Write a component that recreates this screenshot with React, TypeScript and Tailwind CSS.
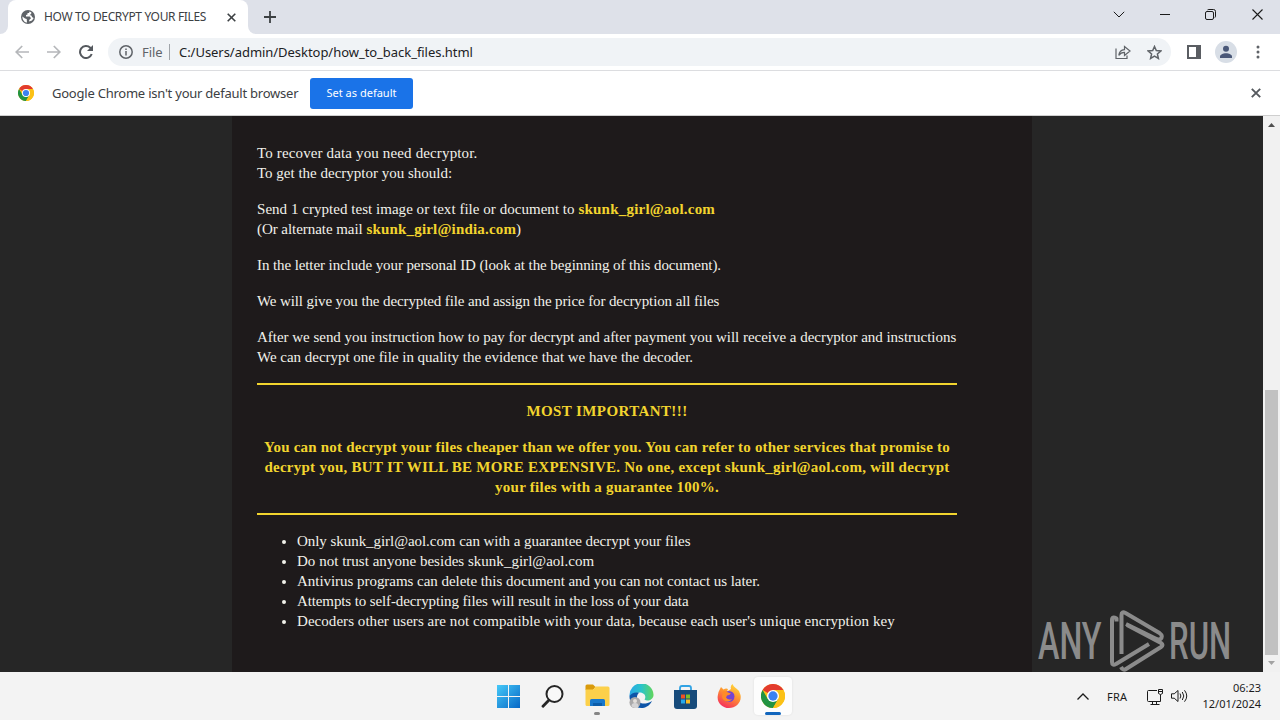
import React from 'react'

const ChromeLogo = ({ className }: { className: string }) => (
  <svg className={className} viewBox="0 0 48 48">
    <circle cx="24" cy="24" r="24" fill="#fbc116" />
    <path d="M24 24 3.2 12A24 24 0 0 1 44.8 12L24 12Z" fill="#e33b2e" />
    <path d="M3.2 12A24 24 0 0 0 24 48L34.4 30 24 24 13.6 30Z" fill="#229342" />
    <path d="M24 12H44.8A24 24 0 0 1 24 48L34.4 30Z" fill="#fbc116" />
    <circle cx="24" cy="24" r="12" fill="#fff" />
    <circle cx="24" cy="24" r="9.3" fill="#3b82f0" />
  </svg>
)

const TabStrip: React.FC = () => (
  <div className="flex h-[34px] bg-[#dee1e9]">
    <div className="w-2 bg-white">
      <div className="h-full rounded-br-lg bg-[#dee1e9]" />
    </div>
    <div className="flex w-[240px] items-center rounded-t-lg bg-white">
      <svg className="ml-[13px] h-[14px] w-[14px]" viewBox="0 0 14 14">
        <circle cx="7" cy="7" r="7" fill="#5f6368" />
        <path d="M1.4 6.4 4 8.6l1.7.5.3 3.5C3.2 12.2 1.3 9.5 1.4 6.4Z" fill="#fff" />
        <path d="M8.6 1.6 8 3H6.5v1.4L5 5v1.6h3.8L10 8.2 8.2 10v1.6L11 10.4l1.7-2.5-1.4-.6-1.2-2h-1.5l1.6-1.5.2-1.4Z" fill="#fff" />
      </svg>
      <span className="ml-[9px] w-[164px] whitespace-nowrap text-[12px] tracking-[-0.35px] text-[#3c4043]">HOW TO DECRYPT YOUR FILES</span>
      <svg className="ml-[19px] h-[9px] w-[9px]" viewBox="0 0 9 9" stroke="#3c4043" strokeWidth="1.6">
        <path d="m.7.7 7.6 7.6M8.3.7.7 8.3" />
      </svg>
    </div>
    <div className="w-2 bg-white">
      <div className="h-full rounded-bl-lg bg-[#dee1e9]" />
    </div>
    <svg className="mt-[11px] ml-2 h-3 w-3" viewBox="0 0 12 12" stroke="#3c4043" strokeWidth="1.8">
      <path d="M6 0v12M0 6h12" />
    </svg>
    <div className="ml-auto flex h-[28px] items-center text-[#1b1b1b]">
      <svg className="mr-[35px] h-[7px] w-[12px]" viewBox="0 0 12 7" fill="none" stroke="currentColor">
        <path d="m.8.8 5.2 5.2L11.2.8" />
      </svg>
      <svg className="mt-px mr-[35px] h-px w-[10px]" viewBox="0 0 10 1"><path d="M0 0h10v1H0z" fill="currentColor" /></svg>
      <svg className="mr-[36px] h-[11px] w-[11px]" viewBox="0 0 11 11" fill="none" stroke="currentColor">
        <rect x=".5" y="2.5" width="8" height="8" rx="1.5" />
        <path d="M2.5.9Q3 .5 4 .5h4.5q2 0 2 2V7q0 1-.6 1.6" />
      </svg>
      <svg className="mr-[17px] h-[11px] w-[11px]" viewBox="0 0 11 11" stroke="currentColor" strokeWidth="1.1">
        <path d="m.5.5 10 10M10.5.5l-10 10" />
      </svg>
    </div>
  </div>
)

const Toolbar: React.FC = () => (
  <div className="flex h-[37px] items-center border-b border-[#dcdde0] bg-white text-[#5f6368]">
    <svg className="ml-[15px] h-[14px] w-[14px]" viewBox="0 0 14 14" fill="none" stroke="#b5b7ba" strokeWidth="1.7">
      <path d="M14 7H1.4M7.2 1 1.2 7l6 6" />
    </svg>
    <svg className="ml-[18px] h-[14px] w-[14px]" viewBox="0 0 14 14" fill="none" stroke="#b5b7ba" strokeWidth="1.7">
      <path d="M0 7h12.6M6.8 1l6 6-6 6" />
    </svg>
    <svg className="ml-[18px] h-[14px] w-[14px]" viewBox="0 0 14 14" fill="none" stroke="#55595e" strokeWidth="2">
      <path d="M12.7 9A6 6 0 1 1 11.3 2.8L13 4.6" />
      <path d="M14 0v6H8Z" fill="#55595e" stroke="none" />
    </svg>
    <div className="ml-[15px] flex h-7 w-[1063px] items-center rounded-full bg-[#f0f3f6]">
      <svg className="ml-[11px] h-[14px] w-[14px]" viewBox="0 0 14 14" fill="none" stroke="currentColor" strokeWidth="1.5">
        <circle cx="7" cy="7" r="6.2" />
        <path d="M7 6.1v4.4M7 3.4V5" />
      </svg>
      <span className="mt-[2px] ml-[9px] w-[20px] text-[13px] tracking-[-0.1px]">File</span>
      <div className="ml-[7px] h-4 w-px bg-[#a0a4a9]" />
      <span className="mt-[2px] ml-[9px] whitespace-nowrap text-[13px] tracking-[-0.04px] text-[#202124]">C:/Users/admin/Desktop/how_to_back_files.html</span>
      <svg className="mr-[16px] ml-auto h-[15px] w-[16px]" viewBox="0 0 16 15" fill="none" stroke="currentColor" strokeWidth="1.2">
        <path d="M1 3.5v10h11v-3" />
        <path d="M3.8 10.4c.4-3.6 2.4-5.4 5.7-5.7V1.5L15 6l-5.5 4.4V7.4C7 7.400 5.2 8.2 3.8 10.400Z" />
      </svg>
      <svg className="mr-[9px] h-[15px] w-[15px]" viewBox="0 0 15 15" fill="none" stroke="currentColor" strokeWidth="1.5">
        <path d="m7.500 1.500 1.800 4.100 4.500.4-3.400 3 1 4.400-3.900-2.300-3.900 2.300 1-4.400-3.400-3 4.500-.4Z" />
      </svg>
    </div>
    <svg className="ml-[16px] h-[14px] w-[14px]" viewBox="0 0 14 14">
      <path fillRule="evenodd" d="M0 0h14v14H0ZM2 2v10h7V2Z" fill="#5a5d62" />
    </svg>
    <svg className="ml-[14px] h-[22px] w-[22px]" viewBox="0 0 22 22" fill="#4a5878">
      <circle cx="11" cy="11" r="11" fill="#d8dee6" />
      <circle cx="11" cy="7.8" r="3" />
      <path d="M5 17v-1.5c0-2 3-3.3 6-3.3s6 1.3 6 3.3V17Z" />
    </svg>
    <svg className="ml-[19px] h-[14px] w-[4px]" viewBox="0 0 4 14" fill="currentColor">
      <circle cx="2" cy="2" r="1.5" />
      <circle cx="2" cy="7" r="1.5" />
      <circle cx="2" cy="12" r="1.5" />
    </svg>
  </div>
)

const InfoBar: React.FC = () => (
  <div className="flex h-[45px] items-center border-b border-[#cfcfcf] bg-white">
    <ChromeLogo className="ml-[18px] h-4 w-4" />
    <span className="mt-[2px] ml-[18px] w-[246px] whitespace-nowrap text-[13px] tracking-[-0.23px] text-[#3c4043]">Google Chrome isn't your default browser</span>
    <div className="ml-[12px] flex h-[31px] w-[103px] items-center justify-center rounded-[3px] bg-[#1a73e8] text-[11px] whitespace-nowrap text-white">
      Set as default
    </div>
    <svg className="mr-[19px] ml-auto h-[10px] w-[10px]" viewBox="0 0 10 10" stroke="#55595e" strokeWidth="1.9">
      <path d="m.8.8 8.4 8.4M9.2.8.8 9.2" />
    </svg>
  </div>
)

const Watermark: React.FC = () => (
  <div className="absolute top-[494px] left-[1038px] h-[62px] w-[194px] text-[#8b8b8b]">
    <div className="absolute top-[2px] left-0 origin-left scale-x-[0.62] font-['Roboto'] text-[52px] leading-[60px] font-medium">ANY</div>
    <svg className="absolute top-0 left-[71px] h-[62px] w-[56px]" viewBox="0 0 56 62" fill="none" stroke="currentColor" strokeWidth="4" strokeLinejoin="round">
      <path d="M7.5 11.5V8.5Q3 6 3 10v42q0 4 4 2L40 34" />
      <path d="M12.5 44V5q0-4 4-2l34 20q4 3 1 6-2 1-5-.5L17 14" />
      <path d="M18 15l34 18q3 2 0 4L17 59q-3 2-5-2" />
    </svg>
    <div className="absolute top-[2px] left-[131px] origin-left scale-x-[0.6] font-['Roboto'] text-[52px] leading-[60px] font-medium">RUN</div>
  </div>
)

const Page: React.FC = () => (
  <div className="relative flex h-[556px] overflow-hidden bg-[#262626]">
    <div className="ml-[232px] w-[800px] bg-[#1e1a1b] pt-[27px] pr-[75px] pl-[25px] font-['Liberation_Serif',serif] text-[15px] leading-5 text-[#f1f1ea]">
      <div className="space-y-4 whitespace-nowrap">
        <p>
          <span className="tracking-[0.14px]">To recover data you need decryptor.</span>
          <br />
          To get the decryptor you should:
        </p>
        <p>
          <span className="tracking-[0.035px]">Send 1 crypted test image or text file or document to </span>
          <b className="tracking-[0.22px] text-[#f2d42e]">skunk_girl@aol.com</b>
          <br />
          <span className="tracking-[-0.05px]">(Or alternate mail </span>
          <b className="tracking-[0.18px] text-[#f2d42e]">skunk_girl@india.com</b>)
        </p>
        <p className="tracking-[-0.095px]">In the letter include your personal ID (look at the beginning of this document).</p>
        <p className="tracking-[-0.11px]">We will give you the decrypted file and assign the price for decryption all files</p>
        <p className="tracking-[-0.023px]">
          After we send you instruction how to pay for decrypt and after payment you will receive a decryptor and instructions
          <br />
          We can decrypt one file in quality the evidence that we have the decoder.
        </p>
        <div className="space-y-4 border-y-2 border-[#f2d42e] py-4 text-center font-bold text-[#f2d42e]">
          <p className="tracking-[0.4px]">MOST IMPORTANT!!!</p>
          <p>
            <span className="tracking-[0.215px]">You can not decrypt your files cheaper than we offer you. You can refer to other services that promise to</span>
            <br />
            <span className="tracking-[0.26px]">decrypt you, BUT IT WILL BE MORE EXPENSIVE. No one, except skunk_girl@aol.com, will decrypt</span>
            <br />
            <span className="tracking-[0.25px]">your files with a guarantee 100%.</span>
          </p>
        </div>
        <ul className="list-disc pl-10">
          <li className="tracking-[-0.05px]">Only skunk_girl@aol.com can with a guarantee decrypt your files</li>
          <li className="tracking-[0.02px]">Do not trust anyone besides skunk_girl@aol.com</li>
          <li className="tracking-[-0.04px]">Antivirus programs can delete this document and you can not contact us later.</li>
          <li className="tracking-[-0.115px]">Attempts to self-decrypting files will result in the loss of your data</li>
          <li className="tracking-[0.05px]">Decoders other users are not compatible with your data, because each user's unique encryption key</li>
        </ul>
      </div>
    </div>
    <div className="ml-auto flex w-[17px] flex-col items-center bg-[#f1f1f1]">
      <svg className="mt-[7px] h-1 w-[7px]" viewBox="0 0 7 4"><path d="M0 4 3.5 0 7 4Z" fill="#505050" /></svg>
      <div className="mt-[263px] h-[265px] w-[13px] bg-[#c1c1c1]" />
      <svg className="mt-[6px] h-1 w-[7px]" viewBox="0 0 7 4"><path d="M0 0h7L3.5 4Z" fill="#a3a3a3" /></svg>
    </div>
    <Watermark />
  </div>
)

const Taskbar: React.FC = () => (
  <div className="flex h-12 bg-[#f3f3f3] text-[#1b1b1b]">
    <div className="ml-[486px] flex">
      <div className="flex w-11 justify-center pt-[13px]">
        <svg className="h-[23px] w-[23px]" viewBox="0 0 23 23">
          <defs>
            <linearGradient id="win" x2="1" y2="1">
              <stop stopColor="#45c9f8" />
              <stop offset="1" stopColor="#0767c6" />
            </linearGradient>
          </defs>
          <path d="M0 0h11v11H0ZM12 0h11v11H12ZM0 12h11v11H0ZM12 12h11v11H12Z" fill="url(#win)" />
        </svg>
      </div>
      <div className="flex w-11 justify-center pt-[13px]">
        <svg className="h-[23px] w-[23px]" viewBox="0 0 23 23" fill="none" stroke="#252525">
          <circle cx="13.5" cy="9" r="8" strokeWidth="2" fill="#f8f8f8" />
          <path d="m7.8 15.2-5.8 6" strokeWidth="2.8" strokeLinecap="round" />
        </svg>
      </div>
      <div className="ml-px flex w-11 flex-col items-center pt-[12px]">
        <svg className="h-[23px] w-[25px]" viewBox="0 0 25 23">
          <path d="M.5 2Q.5.5 2 .5h6L10.5 3 8 6H.5Z" fill="#d99a0b" />
          <path d="M.5 5.5h8l2-3H23q1.500 0 1.500 1.500v16.500q0 1.500-1.500 1.500H2q-1.500 0-1.500-1.500Z" fill="#fcd04a" />
          <path d="M5 22v-5.500q0-1.500 1.500-1.500h12q1.500 0 1.500 1.500V22Z" fill="#1878cc" />
          <path d="M8 22v-3h9v3Z" fill="#0b5daa" />
        </svg>
        <div className="mt-[5px] h-[3px] w-[6px] rounded-full bg-[#858585]" />
      </div>
      <div className="flex w-11 justify-center pt-[12px]">
        <svg className="h-[24px] w-[25px]" viewBox="0 0 25 24">
          <defs>
            <linearGradient id="edge">
              <stop stopColor="#28a8e8" />
              <stop offset=".5" stopColor="#2bc4c8" />
              <stop offset="1" stopColor="#62d65a" />
            </linearGradient>
          </defs>
          <path d="M.5 12A12 12 0 0 1 24.5 10.5C25 16 18 18 15.5 15.5c2.500-4-1-7-5-7C5.500 8.500 2 12 .5 12Z" fill="url(#edge)" />
          <path d="M.5 12C2 9.5 6 7.500 10 8.800c-4 3.700-2 10.200 3.500 10.700 3 .3 6-.5 9.500-2.500C20 22.500 16 24 12.500 24 5 24 .2 18 .5 12Z" fill="#0d55a8" />
          <circle cx="6" cy="18.5" r="5.5" fill="#aaa9aa" />
          <circle cx="6" cy="17" r="2" fill="#e4dfdb" />
          <path d="M2.500 22q0-3 3.500-3t3.500 3-3.500 2-3.500-2Z" fill="#d5d4d5" />
        </svg>
      </div>
      <div className="flex w-11 justify-center pt-[13px]">
        <svg className="h-[24px] w-[23px]" viewBox="0 0 23 24">
          <path d="M6 6V3q0-2 2-2h7q2 0 2 2v3" fill="none" stroke="#32a3e4" strokeWidth="1.8" />
          <path d="M0 5h23v16q0 3-3 3H3q-3 0-3-3Z" fill="#174b7b" />
          <path d="M7 9.500h4v4H7Z" fill="#f05125" />
          <path d="M12 9.500h4v4h-4Z" fill="#80bd27" />
          <path d="M7 14.500h4v4H7Z" fill="#27a9ea" />
          <path d="M12 14.500h4v4h-4Z" fill="#f8bb24" />
        </svg>
      </div>
      <div className="flex w-11 justify-center pt-[12px]">
        <svg className="h-[24px] w-[24px]" viewBox="0 0 24 24">
          <defs>
            <linearGradient id="fox" x1=".8" y1="0" x2=".3" y2="1">
              <stop stopColor="#ffdf3c" />
              <stop offset=".45" stopColor="#ff9330" />
              <stop offset="1" stopColor="#f42d5d" />
            </linearGradient>
          </defs>
          <path d="M2.500 6 4 3l2.500 2.500Q9 4 11 5l-1 2.500L14 5q-1-3 1.500-5c1 3 4 4 5.500 6l1 1 1.500 4C25 18 19 24 12 24S-1 18 1 10.500Q1.200 8 2.500 6Z" fill="url(#fox)" />
          <circle cx="12" cy="12.5" r="5.5" fill="#7644cf" />
          <path d="M6 7.500q3-1 5 1l3 1q-2 2-4 2l-1 2q2 3 6 1.500c-2 4-9 3-10-2Z" fill="#ff8b27" />
        </svg>
      </div>
      <div className="flex w-11 justify-center pt-[5px]">
        <div className="flex h-[38px] w-[38px] flex-col items-center rounded bg-[#fdfdfd] pt-[7px] shadow-[0_0_2px_#d8d8d8]">
          <ChromeLogo className="h-6 w-6" />
          <div className="mt-[4px] h-[3px] w-4 rounded-full bg-[#1266bd]" />
        </div>
      </div>
    </div>
    <div className="ml-auto flex h-12 items-center">
      <svg className="h-[7px] w-[12px]" viewBox="0 0 12 7" fill="none" stroke="currentColor" strokeWidth="1.3">
        <path d="m.5 6.500 5.500-5.500 5.500 5.500" />
      </svg>
      <span className="mt-[2px] ml-[18px] w-[21px] text-[11px] tracking-[0.2px]">FRA</span>
      <svg className="ml-[18px] h-[17px] w-[17px]" viewBox="0 0 17 17" fill="none" stroke="currentColor">
        <path d="M11 2.500H2.500q-1 0-1 1v9q0 1 1 1h12V6.500M4.500 16.500h9M6.500 13.500v3M10.500 13.500v3" />
        <path d="M12.500 1.500h4v4q-2 2-4 0ZM12.500 3.500h4" />
      </svg>
      <svg className="ml-[8px] h-[14px] w-[17px]" viewBox="0 0 17 14" fill="none" stroke="currentColor">
        <path d="M.5 4.800h2.700L7 1.500v11L3.200 9.200H.5ZM9 4.500q1.700 2.500 0 5M11.300 3q3 4 0 8M13.500 1.300q4.500 5.700 0 11.400" />
      </svg>
      <div className="mr-[19px] ml-[12px] w-[61px] text-right text-[11px] leading-4 whitespace-nowrap">
        <p>06:23</p>
        <p>12/01/2024</p>
      </div>
    </div>
  </div>
)

const App: React.FC = () => {
  return (
    <div className="h-[720px] w-[1280px] overflow-hidden font-['Noto_Sans',sans-serif]">
      <TabStrip />
      <Toolbar />
      <InfoBar />
      <Page />
      <Taskbar />
    </div>
  )
}

export default App
